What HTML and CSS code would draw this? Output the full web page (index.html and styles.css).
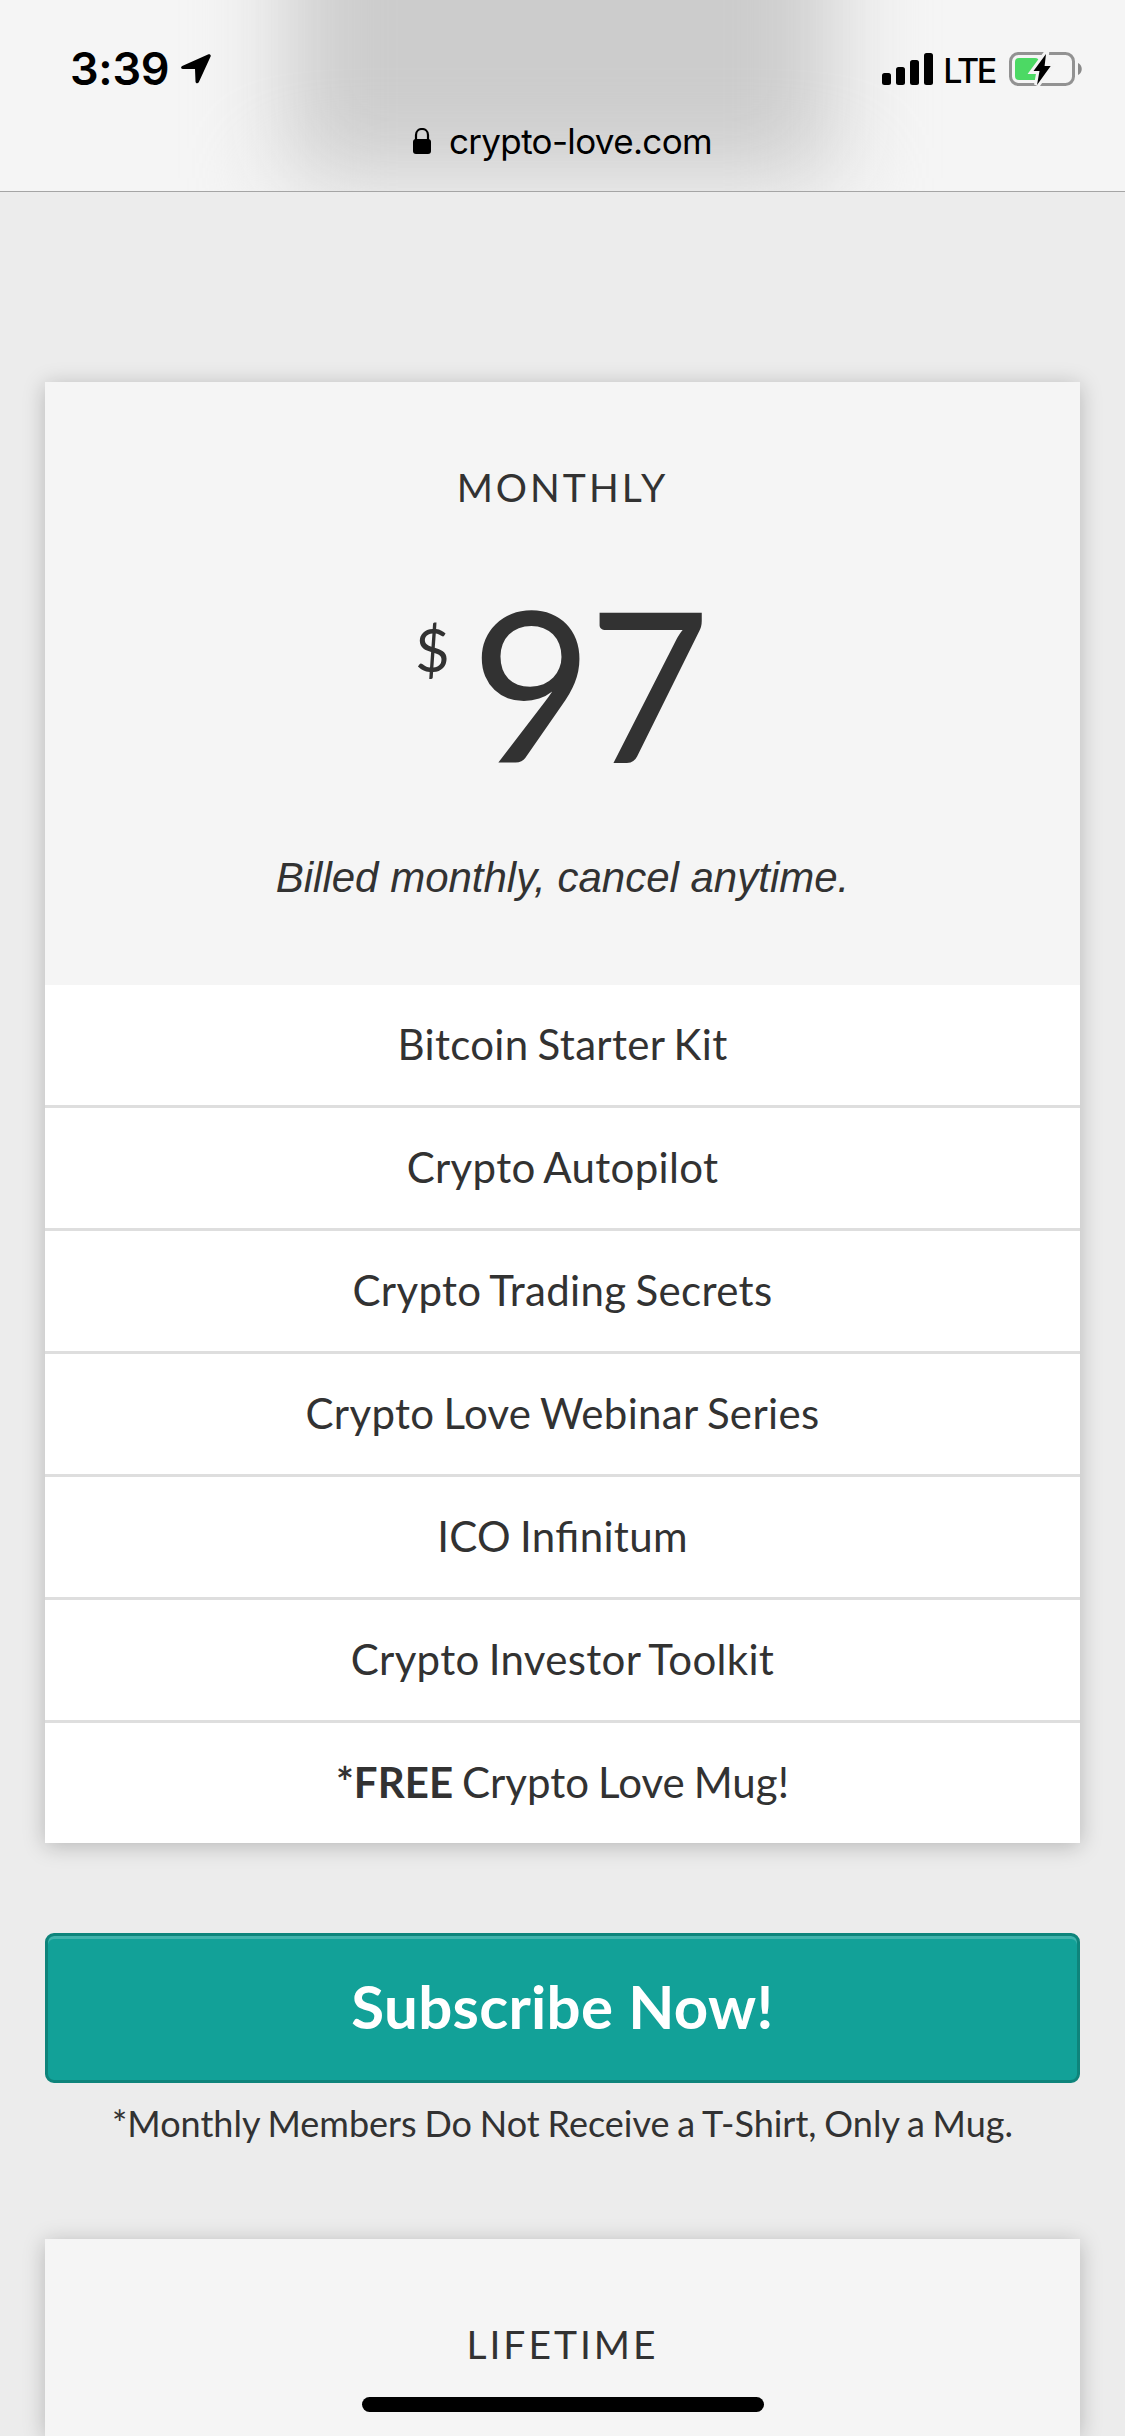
FILE: index.html
```html
<!DOCTYPE html>
<html lang="en">
<head>
<meta charset="utf-8">
<title>Crypto Love</title>
<link rel="stylesheet" href="styles.css">
</head>
<body>
<header class="browser-bar">
  <div class="bar-glow"></div>
  <div class="status">
    <div class="status-left">
      <span class="time">3:39</span>
      <svg class="location" width="30" height="30" viewBox="0 0 30 30"><path d="M27.500 0.300L1.200 12C-0.500 13 -0.200 14.800 1.800 14.900H14L14.500 27.500C14.600 29.600 16.800 30 17.800 28.200L29.600 2.600C30.200 1 29 0 27.500 0.300Z"/></svg>
    </div>
    <div class="status-right">
      <svg class="signal" width="51" height="32" viewBox="0 0 51 32"><rect y="20" width="9" height="12" rx="2.500"/><rect x="14" y="14" width="9" height="18" rx="2.500"/><rect x="28" y="7" width="9" height="25" rx="2.500"/><rect x="42" width="9" height="32" rx="2.500"/></svg>
      <span class="network">LTE</span>
      <svg class="battery" width="74" height="36" viewBox="0 0 74 36">
        <rect x="1.500" y="2.500" width="63" height="31" rx="8" fill="none" stroke="#929292" stroke-width="3"/>
        <path d="M69 12c5 2 5 10 0 12Z" fill="#8a8a8a"/>
        <rect x="6" y="7" width="24" height="22" rx="4" fill="#4cd964"/>
        <path d="M37 3 24.500 20H30.500L28 34 41.700 15H35.600Z" fill="#f4f4f4" stroke="#f4f4f4" stroke-width="6"/>
        <path d="M37 3 24.500 20H30.500L28 34 41.700 15H35.600Z"/>
      </svg>
    </div>
  </div>
  <div class="address">
    <svg class="lock" width="18" height="26" viewBox="0 0 18 26"><path d="M3 13V7C3-1 15-1 15 7V13" fill="none" stroke="#000" stroke-width="2.200"/><rect y="11" width="18" height="15" rx="3"/></svg>
    <span>crypto-love.com</span>
  </div>
</header>
<main class="page">
  <section class="plan">
    <div class="plan-head">
      <h2 class="plan-name">MONTHLY</h2>
      <div class="price"><span class="currency">$</span><span class="amount">97</span></div>
      <p class="billing">Billed monthly, cancel anytime.</p>
    </div>
    <ul class="features">
      <li>Bitcoin Starter Kit</li>
      <li>Crypto Autopilot</li>
      <li>Crypto Trading Secrets</li>
      <li>Crypto Love Webinar Series</li>
      <li>ICO Infinitum</li>
      <li>Crypto Investor Toolkit</li>
      <li class="bonus"><b>*FREE</b> Crypto Love Mug!</li>
    </ul>
  </section>
  <button class="subscribe">Subscribe Now!</button>
  <p class="note">*Monthly Members Do Not Receive a T-Shirt, Only a Mug.</p>
  <section class="plan">
    <div class="plan-head plan-head-peek">
      <h2 class="plan-name">LIFETIME</h2>
    </div>
  </section>
</main>
<div class="home-indicator"></div>
</body>
</html>
```
FILE: styles.css
```css
* { box-sizing: border-box; margin: 0; padding: 0; }
body {
  width: 1125px;
  height: 2436px;
  overflow: hidden;
  position: relative;
  background: #ececec;
  color: #323232;
  font-family: Lato, sans-serif;
}
.browser-bar {
  height: 192px;
  position: relative;
  overflow: hidden;
  background: #f5f5f5;
  border-bottom: 1px solid #a5a5a5;
  color: #000;
  font-family: Inter, sans-serif;
}
.bar-glow {
  position: absolute;
  left: 288px;
  top: -200px;
  width: 545px;
  height: 378px;
  background: #cccccc;
  filter: blur(46px);
}
.status {
  position: relative;
  display: flex;
  justify-content: space-between;
  padding: 45px 42px 0 70px;
  height: 120px;
}
.status-left, .status-right { display: flex; height: 48px; align-items: center; }
.time { font-size: 45px; font-weight: 600; line-height: 48px; letter-spacing: -.3px; }
.location { margin-left: 12px; }
.network { font-size: 34px; font-weight: 500; line-height: 48px; margin: 3px 14px 0 10px; letter-spacing: -2.3px; }
.address {
  position: relative;
  display: flex;
  justify-content: center;
  align-items: center;
  gap: 18px;
  height: 42px;
  font-size: 35px;
  line-height: 42px;
  letter-spacing: -.65px;
}
.page { padding: 190px 45px 0; }
.plan {
  background: #fff;
  box-shadow: 0 3px 21px rgba(0, 0, 0, .23);
  text-align: center;
}
.plan-head { height: 603px; padding-top: 82px; background: #f5f5f5; }
.plan-head-peek { height: 197px; }
.plan-name { font-size: 39px; font-weight: 400; line-height: 47px; letter-spacing: 3px; }
.price { display: flex; justify-content: center; height: 210px; margin-top: 66px; }
.currency { font-size: 60px; line-height: 76px; margin: 34px 21px 0 0; }
.amount { font-size: 210px; line-height: 210px; letter-spacing: -4.5px; margin-right: 4.5px; }
.billing { font-family: "Liberation Sans", sans-serif; font-style: italic; font-size: 42px; line-height: 60px; margin-top: 61px; }
.features {
  list-style: none;
  font-size: 42px;
  line-height: 118px;
  letter-spacing: .33px;
  word-spacing: -2px;
  font-feature-settings: "liga" 1;
}
.features li { border-bottom: 3px solid #dedede; height: 123px; }
.features li:last-child { border-bottom: 0; height: 120px; }
.features .bonus { letter-spacing: .06px; }
.subscribe {
  display: block;
  width: 100%;
  height: 150px;
  margin-top: 90px;
  padding-bottom: 4px;
  border: 3px solid #0e847b;
  border-radius: 9px;
  background: #12a198;
  box-shadow: inset 0 3px 0 rgba(255, 255, 255, .2);
  color: #fff;
  font: 700 60px/140px Lato, sans-serif;
  letter-spacing: .3px;
}
.note { margin: 16px 0 92px; font-size: 36px; line-height: 48px; text-align: center; word-spacing: -1.4px; }
.home-indicator {
  position: absolute;
  left: 362px;
  top: 2397px;
  width: 402px;
  height: 15px;
  border-radius: 8px;
  background: #000;
}
```
